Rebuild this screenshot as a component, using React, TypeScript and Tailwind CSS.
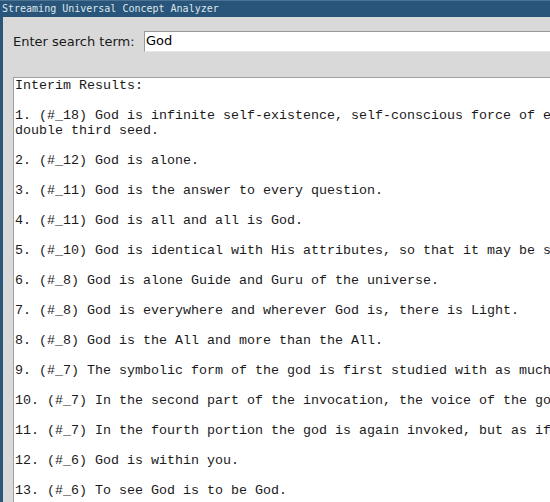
const RESULTS: string[][] = [
  [
    "1. (#_18) God is infinite self-existence, self-conscious force of existence, self-delight of existence, the",
    "double third seed.",
  ],
  ["2. (#_12) God is alone."],
  ["3. (#_11) God is the answer to every question."],
  ["4. (#_11) God is all and all is God."],
  ["5. (#_10) God is identical with His attributes, so that it may be said that God is Truth."],
  ["6. (#_8) God is alone Guide and Guru of the universe."],
  ["7. (#_8) God is everywhere and wherever God is, there is Light."],
  ["8. (#_8) God is the All and more than the All."],
  ["9. (#_7) The symbolic form of the god is first studied with as much care as possible."],
  ["10. (#_7) In the second part of the invocation, the voice of the god is heard."],
  ["11. (#_7) In the fourth portion the god is again invoked, but as if he were present."],
  ["12. (#_6) God is within you."],
  ["13. (#_6) To see God is to be God."],
];

export default function App() {
  return (
    <div className="w-[550px] h-[502px] overflow-hidden flex flex-col bg-[#d9d9d9]">
      {/* Title bar */}
      <div
        className="h-[17px] shrink-0 bg-[#285579] border-t border-[#4d7394] px-[2px] text-[10px] leading-[15px] text-[#dfe6ec] whitespace-nowrap"
        style={{ fontFamily: '"DejaVu Sans Mono", monospace' }}
      >
        Streaming Universal Concept Analyzer
      </div>

      <div className="flex flex-1 min-h-0">
        <div className="w-[3px] shrink-0 bg-[#2a5678]" />

        <div className="flex-1 min-w-0 flex flex-col pl-[10px]">
          {/* Search row */}
          <div
            className="flex items-center mt-[14px] h-[21px] shrink-0"
            style={{ fontFamily: '"DejaVu Sans", sans-serif' }}
          >
            <span className="text-[13px] text-[#1a1a1a] w-[131px] shrink-0 whitespace-nowrap">
              Enter search term:
            </span>
            <div className="flex-1 h-[21px] bg-white border-t border-l border-[#9a9a9a] border-b border-b-[#e6e6e6] pl-[1px] text-[13px] leading-[18px] text-black">
              God
            </div>
          </div>

          {/* Results area */}
          <div className="mt-[25px] flex-1 min-h-0 bg-white border-t border-l border-[#a0a0a0] overflow-hidden pl-[1px]">
            <div
              className="text-[13.33px] leading-[15px] text-[#1a1a1a] whitespace-pre"
              style={{ fontFamily: '"Courier New", "Liberation Mono", monospace' }}
            >
              <div>Interim Results:</div>
              <div>&nbsp;</div>
              {RESULTS.map((lines, i) => (
                <div key={i}>
                  {lines.map((l, j) => (
                    <div key={j}>{l}</div>
                  ))}
                  <div>&nbsp;</div>
                </div>
              ))}
            </div>
          </div>
        </div>
      </div>
    </div>
  );
}
